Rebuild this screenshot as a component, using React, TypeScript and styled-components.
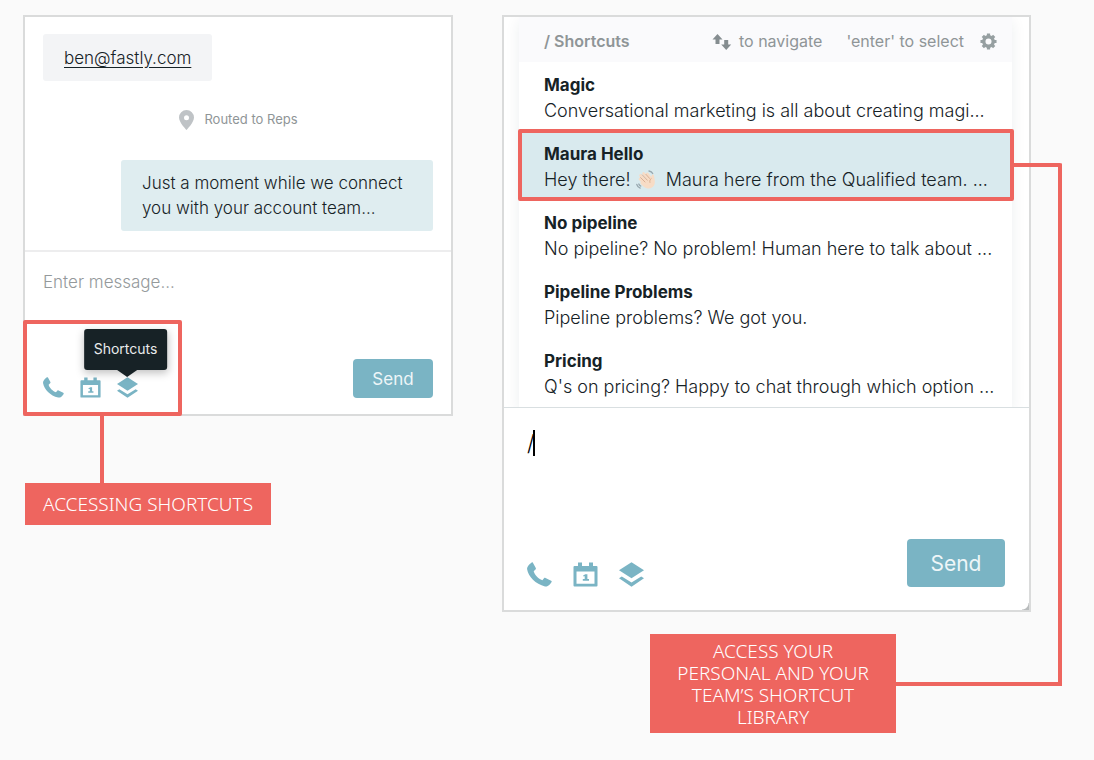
import React from "react";
import styled, { createGlobalStyle } from "styled-components";

const coral = "#ee655f";
const teal = "#7ab4c4";
const ink = "#162226";
const muted = "#8f9597";

const GlobalStyle = createGlobalStyle`
  * { box-sizing: border-box; }
  body {
    margin: 0;
    background: #fafafa;
    color: ${ink};
    font-family: Inter, "Liberation Sans", sans-serif;
  }
  svg { display: block; flex: none; }
`;

const Page = styled.main`
  display: grid;
  grid-template-columns: 430fr 529fr;
  gap: 49px;
  align-items: start;
  padding: 15px 63px 27px 23px;
`;

const Column = styled.section`
  position: relative;
  min-width: 0;
`;

const Panel = styled.div`
  position: relative;
  display: flex;
  flex-direction: column;
  background: #fff;
  border: 2px solid #dadbdb;
`;

const Thread = styled.div`
  display: flex;
  flex-direction: column;
  align-items: flex-start;
  padding: 17px 18px 19px;
`;

const VisitorBubble = styled.a`
  padding: 12px 21px 10px;
  border-radius: 3px;
  background: #f3f4f6;
  color: ${ink};
  font-weight: 300;
  font-size: 17px;
  line-height: 25px;
  text-underline-offset: 3px;
`;

const RoutedNote = styled.p`
  display: flex;
  align-items: center;
  align-self: center;
  gap: 9px;
  margin: 26px 0 28px;
  color: ${muted};
  font-size: 13px;
  line-height: 25px;
`;

const AgentBubble = styled.p`
  align-self: flex-end;
  width: 312px;
  margin: 0;
  padding: 11px 21px 10px;
  border-radius: 3px;
  background: #dfedf0;
  font-weight: 300;
  font-size: 17px;
  line-height: 25px;
`;

const Composer = styled.form<{ $large?: boolean }>`
  display: flex;
  flex-direction: column;
  border-top: ${(p) => (p.$large ? "1px solid #d9dfe1" : "2px solid #ededee")};
  padding: ${(p) => (p.$large ? "22px 24px 23px 23px" : "17px 18px 16px")};
`;

const MessageBox = styled.div`
  position: relative;
`;

const MessageInput = styled.textarea<{ $large?: boolean }>`
  display: block;
  width: 100%;
  height: ${(p) => (p.$large ? 109 : 90)}px;
  padding: 0;
  border: 0;
  outline: 0;
  resize: none;
  background: transparent;
  color: #000;
  font-family: inherit;
  font-weight: 300;
  font-size: ${(p) => (p.$large ? 22 : 17)}px;
  line-height: 26px;
  &::placeholder { color: #94999b; opacity: 1; }
`;

const Caret = styled.span`
  position: absolute;
  top: 0;
  left: 6px;
  width: 2px;
  height: 26px;
  background: #000;
`;

const Actions = styled.div`
  display: flex;
  align-items: flex-end;
  justify-content: space-between;
`;

const IconBar = styled.div<{ $large?: boolean }>`
  display: flex;
  gap: ${(p) => (p.$large ? 21 : 16)}px;
`;

const IconButton = styled.button`
  position: relative;
  padding: 0;
  border: 0;
  background: none;
  color: ${teal};
  font-family: inherit;
`;

const Tooltip = styled.span`
  position: absolute;
  z-index: 1;
  bottom: 28px;
  left: 50%;
  transform: translateX(-50%);
  margin-left: -2px;
  padding: 0 10px 2px;
  border-radius: 3px;
  background: #172226;
  box-shadow: 0 3px 8px rgba(0, 0, 0, 0.25);
  color: #e9ebec;
  font-size: 14px;
  line-height: 39px;
  &::after {
    content: "";
    position: absolute;
    top: 100%;
    left: 50%;
    margin-left: -8px;
    border: 10px solid transparent;
    border-top: 7px solid #172226;
    border-bottom: 0;
  }
`;

const SendButton = styled.button<{ $large?: boolean }>`
  width: ${(p) => (p.$large ? 98 : 80)}px;
  height: ${(p) => (p.$large ? 48 : 39)}px;
  padding: 0;
  border: 0;
  border-radius: 4px;
  background: ${teal};
  color: #eef6f8;
  font-family: inherit;
  font-size: ${(p) => (p.$large ? 21 : 17)}px;
`;

const ToolbarFrame = styled.div`
  position: absolute;
  left: -2px;
  bottom: -2px;
  width: 159px;
  height: 96px;
  border: 4px solid ${coral};
  border-radius: 2px;
  pointer-events: none;
`;

const DropLine = styled.div`
  width: 4px;
  height: 67px;
  margin-left: 77px;
  background: ${coral};
`;

const Callout = styled.div<{ $tall?: boolean }>`
  width: 246px;
  flex: none;
  margin-left: ${(p) => (p.$tall ? 0 : 2)}px;
  padding: ${(p) => (p.$tall ? "6px 20px 5px" : "10px 12px")};
  background: ${coral};
  color: #fff;
  font-family: "Noto Sans", sans-serif;
  font-weight: 300;
  font-size: 19px;
  line-height: 22px;
  text-align: center;
`;

const LibraryCallout = styled.div`
  display: flex;
  align-items: center;
  margin: 22px -31px 0 148px;
`;

const SideLine = styled.div`
  flex: 1;
  height: 4px;
  background: ${coral};
`;

const Bracket = styled.div`
  position: absolute;
  top: 148px;
  right: -31px;
  bottom: 48px;
  width: 49px;
  border: solid ${coral};
  border-width: 4px 4px 0 0;
  border-radius: 0 2px 2px 0;
`;

const Menu = styled.div`
  margin: 0 17px 0 15px;
  background: #fff;
  box-shadow: 0 4px 14px rgba(30, 50, 70, 0.08);
  clip-path: inset(0 -15px 0 -15px);
`;

const MenuHeader = styled.div`
  display: flex;
  align-items: center;
  padding: 4px 15px 0 25px;
  background: #fafafc;
  color: ${muted};
  font-size: 16px;
  line-height: 41px;
  white-space: nowrap;
`;

const MenuTitle = styled.span`
  margin-right: auto;
  font-weight: 600;
`;

const Hint = styled.span`
  display: flex;
  align-items: center;
  gap: 7px;
  margin-right: 24px;
`;

const Settings = styled(IconButton)`
  margin-left: -8px;
  color: #969fa1;
`;

const ShortcutList = styled.ul`
  margin: 0;
  padding: 0;
  list-style: none;
`;

const Shortcut = styled.li<{ $active?: boolean }>`
  position: relative;
  padding: 10px 15px 7px 25px;
  background: ${(p) => (p.$active ? "#d9eaee" : "transparent")};
  line-height: 26px;
  white-space: nowrap;
  &::after {
    content: "";
    display: ${(p) => (p.$active ? "block" : "none")};
    position: absolute;
    inset: -2px -2px -1px -1px;
    border: 4px solid ${coral};
    border-radius: 2px;
  }
`;

const ShortcutName = styled.strong`
  display: block;
  font-weight: 700;
  font-size: 17px;
`;

const ShortcutText = styled.span`
  display: flex;
  align-items: center;
  font-weight: 300;
  font-size: 18px;
`;

const Corner = styled.span`
  position: absolute;
  right: 0;
  bottom: 0;
  width: 7px;
  height: 7px;
  background: radial-gradient(circle at 0 0, #fff 6px, #b9bcbd 7px);
`;

type IconProps = { size: number };

const PhoneIcon = ({ size }: IconProps) => (
  <svg width={size} height={size} viewBox="0 0 25 25" fill="currentColor">
    <path d="M.4 5.200C1.400 3 3 1.500 4.700.4c.5-.3.9-.2 1.200.3l2.900 5.200c.3.600.2 1-.3 1.500L6.700 9.200c.9 3.600 4.600 7.400 8.700 9l1.600-1.900c.4-.5.9-.6 1.500-.3l5.600 2.700c.6.3.8.800.5 1.400-1 1.900-2.500 3.300-4.400 4.200-.7.3-1.400.3-2.200.1C8.600 22.200 1.300 14.600.1 7.300 0 6.500.1 5.900.4 5.200z" />
  </svg>
);

const CalendarIcon = ({ size }: IconProps) => (
  <svg width={size} height={size} viewBox="0 0 25 25" fill="currentColor">
    <path
      fillRule="evenodd"
      d="M5 .5h4V4h7V.5h4V4h3.500a1 1 0 0 1 1 1v18.500a1 1 0 0 1-1 1h-22a1 1 0 0 1-1-1V5a1 1 0 0 1 1-1H5zM3.500 9.500v12.300h18V9.500z"
    />
    <path d="M10 13.800 12.200 12.300h2.200v4.700H16v1.800H9.800V17h1.900v-2.800H10z" />
  </svg>
);

const LayersIcon = ({ size }: IconProps) => (
  <svg width={size} height={size} viewBox="0 0 25 25" fill="currentColor">
    <path d="M12.500.3 25 8.300 12.500 16.300 0 8.300z" />
    <path d="M0 16.300l2.800-1.800 9.700 5.900 9.700-5.900 2.800 1.800-12.500 8.500z" />
  </svg>
);

const PinIcon = () => (
  <svg width="17" height="20" viewBox="0 0 17 20" fill="#bfc3c6">
    <path
      fillRule="evenodd"
      d="M8.500 0A7.500 7.500 0 0 1 16 7.500C16 12.500 8.500 20 8.500 20S1 12.500 1 7.500A7.500 7.500 0 0 1 8.500 0zm0 5.200a2.500 2.500 0 1 0 0 5 2.500 2.500 0 0 0 0-5z"
    />
  </svg>
);

const ArrowsIcon = () => (
  <svg width="20" height="18" viewBox="0 0 20 18" fill="#858d90">
    <path d="M5.500 1 10.500 6.500H7.500V11H3.500V6.500H.5z" />
    <path d="M14.200 17 19.200 11.500H16.200V7H12.200V11.500H9.200z" />
  </svg>
);

const GearIcon = () => (
  <svg width="17" height="17" viewBox="0 0 18 18" fill="none" stroke="currentColor">
    <circle cx="9" cy="9" r="5" strokeWidth="3.600" />
    {[0, 45, 90, 135].map((angle) => (
      <path
        key={angle}
        d="M9 .5v3M9 14.500v3"
        strokeWidth="3.400"
        transform={`rotate(${angle} 9 9)`}
      />
    ))}
  </svg>
);

const WaveIcon = () => (
  <svg width="20" height="20" viewBox="0 0 20 20" fill="none" strokeLinecap="round">
    <g stroke="#f7dcc6" strokeWidth="2.600">
      <path d="M4 9 10 15" />
      <path d="M4.500 5.500 12 13" />
      <path d="M7.500 3.500 14 10.500" />
      <path d="M11.300 3.800 15.500 9" />
    </g>
    <path
      fill="#f7dcc6"
      d="M6 11 13.500 7 15.200 8.500 15.600 5.500c.3-1.500 2.200-1.200 2.400.2.4 3 1.400 5.300.6 8.300-1 3.500-4.600 5.300-8 4.200-2.200-.7-4.600-3-6.600-5.200z"
    />
    <g stroke="#d3a488" strokeWidth=".8">
      <path d="M4.600 7.600 9 12M6.300 4.900l5 5.300M9.900 4.300l3.800 4.200M15.200 8.600c-1.300 1-1.700 2.400-1.300 3.800" />
    </g>
    <g stroke="#98a8af" strokeWidth="1.300">
      <path d="M.8 14.500c.5 1.800 1.700 2.900 3.400 3.600M2.800 14c.4 1 1 1.700 2 2.100M13 1c1.800.2 3 1 3.700 2.500" />
    </g>
  </svg>
);

const Tools = ({ large, tip }: { large?: boolean; tip?: string }) => {
  const size = large ? 25 : 21;
  return (
    <IconBar $large={large}>
      <IconButton type="button" aria-label="Call">
        <PhoneIcon size={size} />
      </IconButton>
      <IconButton type="button" aria-label="Schedule">
        <CalendarIcon size={size} />
      </IconButton>
      <IconButton type="button" aria-label="Shortcuts">
        {tip && <Tooltip role="tooltip">{tip}</Tooltip>}
        <LayersIcon size={size} />
      </IconButton>
    </IconBar>
  );
};

const shortcuts: { name: string; text: React.ReactNode; active?: boolean }[] = [
  { name: "Magic", text: "Conversational marketing is all about creating magi..." },
  {
    name: "Maura Hello",
    active: true,
    text: (
      <>
        Hey there!&nbsp;
        <WaveIcon />
        &nbsp;&nbsp;Maura here from the Qualified team. ...
      </>
    ),
  },
  { name: "No pipeline", text: "No pipeline? No problem! Human here to talk about ..." },
  { name: "Pipeline Problems", text: "Pipeline problems? We got you." },
  { name: "Pricing", text: "Q's on pricing? Happy to chat through which option ..." },
];

export default function App() {
  return (
    <>
      <GlobalStyle />
      <Page>
        <Column>
          <Panel>
            <Thread>
              <VisitorBubble href="mailto:ben@fastly.com">ben@fastly.com</VisitorBubble>
              <RoutedNote>
                <PinIcon />
                Routed to Reps
              </RoutedNote>
              <AgentBubble>Just a moment while we connect you with your account team...</AgentBubble>
            </Thread>
            <Composer>
              <MessageInput aria-label="Message" placeholder="Enter message..." />
              <Actions>
                <Tools tip="Shortcuts" />
                <SendButton type="button">Send</SendButton>
              </Actions>
            </Composer>
            <ToolbarFrame />
          </Panel>
          <DropLine />
          <Callout>ACCESSING SHORTCUTS</Callout>
        </Column>

        <Column>
          <Panel>
            <Menu>
              <MenuHeader>
                <MenuTitle>/ Shortcuts</MenuTitle>
                <Hint>
                  <ArrowsIcon />
                  to navigate
                </Hint>
                <Hint>'enter' to select</Hint>
                <Settings type="button" aria-label="Settings">
                  <GearIcon />
                </Settings>
              </MenuHeader>
              <ShortcutList>
                {shortcuts.map((s) => (
                  <Shortcut key={s.name} $active={s.active}>
                    <ShortcutName>{s.name}</ShortcutName>
                    <ShortcutText>{s.text}</ShortcutText>
                  </Shortcut>
                ))}
              </ShortcutList>
            </Menu>
            <Composer $large>
              <MessageBox>
                <MessageInput $large aria-label="Message" defaultValue="/" />
                <Caret />
              </MessageBox>
              <Actions>
                <Tools large />
                <SendButton $large type="button">Send</SendButton>
              </Actions>
            </Composer>
            <Corner />
          </Panel>
          <Bracket />
          <LibraryCallout>
            <Callout $tall>ACCESS YOUR PERSONAL AND YOUR TEAM’S SHORTCUT LIBRARY</Callout>
            <SideLine />
          </LibraryCallout>
        </Column>
      </Page>
    </>
  );
}
